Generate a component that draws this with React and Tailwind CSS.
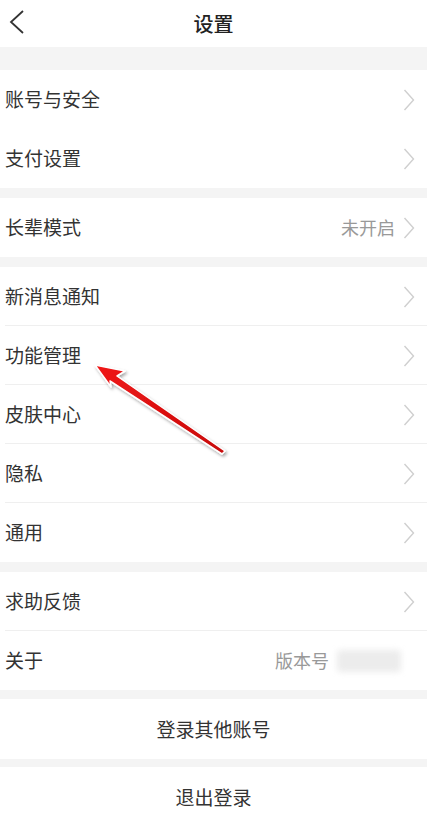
const groups = [
  [{ label: '账号与安全' }, { label: '支付设置' }],
  [{ label: '长辈模式', value: '未开启' }],
  [
    { label: '新消息通知' },
    { label: '功能管理' },
    { label: '皮肤中心' },
    { label: '隐私' },
    { label: '通用' },
  ],
];

function Chevron() {
  return (
    <svg width="12" height="22" viewBox="0 0 12 22" className="shrink-0">
      <polyline points="1.5,1 10.5,11 1.5,21" fill="none" stroke="#cfcfcf" strokeWidth="1.4" />
    </svg>
  );
}

function Row({ label, value, divider, blur }) {
  return (
    <div className="relative h-[59px] flex items-center justify-between pl-[5px] pr-[12px] bg-white">
      <span className="text-[19px] text-[#333]">{label}</span>
      <div className="flex items-center gap-[8px]">
        {value && <span className="text-[18px] text-[#999]">{value}</span>}
        {blur ? (
          <div className="w-[64px] h-[22px] mr-[14px] bg-[#ececec] blur-[3px] rounded" />
        ) : (
          <Chevron />
        )}
      </div>
      {divider && <div className="absolute left-[5px] right-0 bottom-0 h-px bg-[#efefef]" />}
    </div>
  );
}

function Gap({ h }) {
  return <div className={`bg-[#f4f4f4] ${h}`} />;
}

export default function App() {
  return (
    <div className="relative w-[427px] h-[823px] overflow-hidden bg-white font-['Noto_Sans_CJK_SC','Noto_Sans',sans-serif]">
      <div className="relative h-[47px] flex items-center justify-center">
        <svg width="16" height="24" viewBox="0 0 16 24" className="absolute left-[9px] top-[10px]">
          <polyline points="14,1 2,12 14,23" fill="none" stroke="#333" strokeWidth="1.8" />
        </svg>
        <span className="text-[20px] font-medium text-[#222]">设置</span>
      </div>

      <Gap h="h-[23px]" />
      {groups[0].map((r) => <Row key={r.label} {...r} />)}
      <Gap h="h-[10px]" />
      {groups[1].map((r) => <Row key={r.label} {...r} />)}
      <Gap h="h-[10px]" />
      {groups[2].map((r, i) => (
        <Row key={r.label} {...r} divider={i < groups[2].length - 1} />
      ))}
      <Gap h="h-[10px]" />
      <Row label="求助反馈" divider />
      <Row label="关于" value="版本号" blur />
      <Gap h="h-[9px]" />
      <div className="h-[60px] flex items-center justify-center text-[19px] text-[#333]">登录其他账号</div>
      <Gap h="h-[8px]" />
      <div className="h-[60px] flex items-center justify-center text-[19px] text-[#333]">退出登录</div>

      <svg className="absolute left-0 top-0 pointer-events-none" width="427" height="823">
        <defs>
          <linearGradient id="ar" x1="95" y1="365" x2="224" y2="452" gradientUnits="userSpaceOnUse">
            <stop offset="0" stopColor="#f01818" />
            <stop offset="1" stopColor="#c80808" />
          </linearGradient>
          <filter id="sh" x="-20%" y="-20%" width="140%" height="140%">
            <feDropShadow dx="1.5" dy="2" stdDeviation="1.5" floodColor="#000" floodOpacity="0.35" />
          </filter>
        </defs>
        <polygon
          points="95,365 125,371 117,376 225,451 222,454 110,381 111,387"
          fill="url(#ar)"
          stroke="#fff"
          strokeWidth="1.5"
          strokeLinejoin="round"
          filter="url(#sh)"
        />
      </svg>
    </div>
  );
}
